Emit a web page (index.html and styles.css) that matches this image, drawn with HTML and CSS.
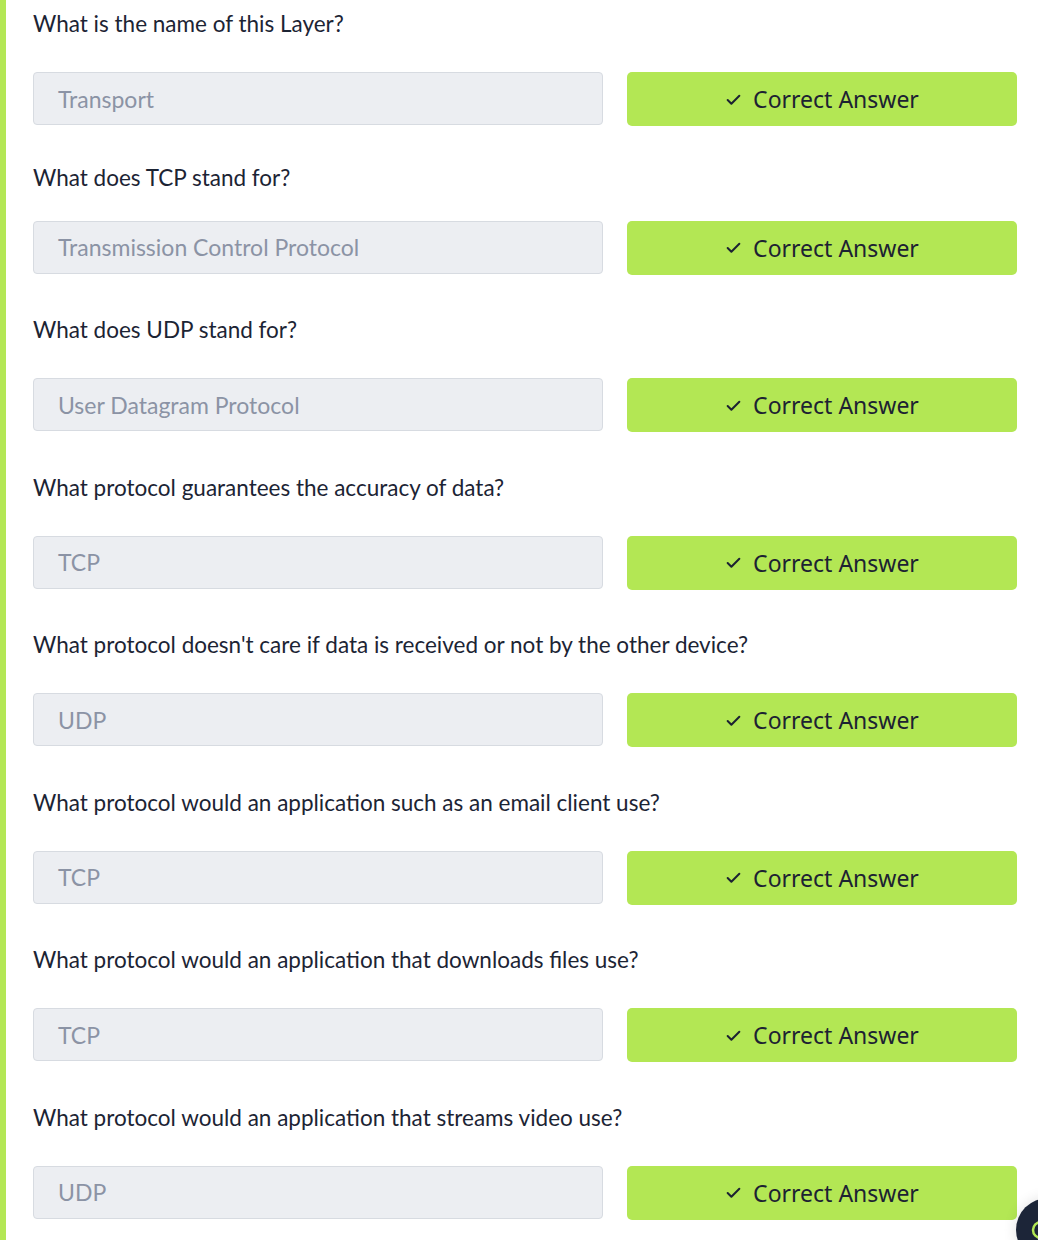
FILE: index.html
```html
<!DOCTYPE html>
<html lang="en">
<head>
<meta charset="utf-8">
<title>Quiz</title>
<link rel="stylesheet" href="styles.css">
</head>
<body>
<main class="task">
  <section class="qa">
    <p class="question">What is the name of this Layer?</p>
    <div class="row">
      <div class="answer">Transport</div>
      <button class="btn"><svg class="check" viewBox="0 0 16 16"><path d="M2.5 8.5 6 12 13.5 4.5"/></svg>Correct Answer</button>
    </div>
  </section>
  <section class="qa qa-tight">
    <p class="question">What does TCP stand for?</p>
    <div class="row">
      <div class="answer">Transmission Control Protocol</div>
      <button class="btn"><svg class="check" viewBox="0 0 16 16"><path d="M2.5 8.5 6 12 13.5 4.5"/></svg>Correct Answer</button>
    </div>
  </section>
  <section class="qa">
    <p class="question">What does UDP stand for?</p>
    <div class="row">
      <div class="answer">User Datagram Protocol</div>
      <button class="btn"><svg class="check" viewBox="0 0 16 16"><path d="M2.5 8.5 6 12 13.5 4.5"/></svg>Correct Answer</button>
    </div>
  </section>
  <section class="qa">
    <p class="question">What protocol guarantees the accuracy of data?</p>
    <div class="row">
      <div class="answer">TCP</div>
      <button class="btn"><svg class="check" viewBox="0 0 16 16"><path d="M2.5 8.5 6 12 13.5 4.5"/></svg>Correct Answer</button>
    </div>
  </section>
  <section class="qa">
    <p class="question">What protocol doesn't care if data is received or not by the other device?</p>
    <div class="row">
      <div class="answer">UDP</div>
      <button class="btn"><svg class="check" viewBox="0 0 16 16"><path d="M2.5 8.5 6 12 13.5 4.5"/></svg>Correct Answer</button>
    </div>
  </section>
  <section class="qa">
    <p class="question">What protocol would an application such as an email client use?</p>
    <div class="row">
      <div class="answer">TCP</div>
      <button class="btn"><svg class="check" viewBox="0 0 16 16"><path d="M2.5 8.5 6 12 13.5 4.5"/></svg>Correct Answer</button>
    </div>
  </section>
  <section class="qa">
    <p class="question">What protocol would an application that downloads files use?</p>
    <div class="row">
      <div class="answer">TCP</div>
      <button class="btn"><svg class="check" viewBox="0 0 16 16"><path d="M2.5 8.5 6 12 13.5 4.5"/></svg>Correct Answer</button>
    </div>
  </section>
  <section class="qa">
    <p class="question">What protocol would an application that streams video use?</p>
    <div class="row">
      <div class="answer">UDP</div>
      <button class="btn"><svg class="check" viewBox="0 0 16 16"><path d="M2.5 8.5 6 12 13.5 4.5"/></svg>Correct Answer</button>
    </div>
  </section>
</main>
<div class="fab"><svg class="fab-icon" viewBox="0 0 24 24"><circle cx="12" cy="12" r="8"/></svg></div>
</body>
</html>
```
FILE: styles.css
```css
html, body {
  margin: 0;
  padding: 0;
  background: #ffffff;
  overflow: hidden;
  height: 1240px;
}
body {
  font-family: Lato, "Open Sans", sans-serif;
  color: #1c2434;
}
.task {
  border-left: 6px solid #b3e755;
  min-height: 1240px;
  box-sizing: border-box;
  padding: 8px 21px 0 27px;
  display: flex;
  flex-direction: column;
}
.qa {
  display: flex;
  flex-direction: column;
  gap: 32px;
  margin-bottom: 39.5px;
}
.qa-tight {
  margin-top: -4px;
  gap: 27px;
}
.question {
  margin: 0;
  font-size: 22.5px;
  line-height: 32px;
}
.row {
  display: flex;
  gap: 24px;
  align-items: flex-start;
}
.answer {
  width: 570px;
  height: 53px;
  box-sizing: border-box;
  background: #eceef2;
  border: 1px solid #d7dbe1;
  border-radius: 4px;
  padding: 0 24px;
  display: flex;
  align-items: center;
  font-size: 23px;
  color: #8b93a5;
}
.btn {
  width: 390px;
  height: 54px;
  border: none;
  border-radius: 5px;
  background: #b3e754;
  color: #1c2232;
  font-family: "Noto Sans", sans-serif;
  font-size: 23px;
  display: flex;
  align-items: center;
  justify-content: center;
  gap: 11px;
  padding: 0;
  cursor: pointer;
}
.check {
  width: 17px;
  height: 17px;
  fill: none;
  stroke: #1c2232;
  stroke-width: 1.9;
  stroke-linecap: round;
  stroke-linejoin: round;
}
.fab {
  position: fixed;
  left: 1016px;
  top: 1198px;
  width: 64px;
  height: 64px;
  border-radius: 50%;
  background: #1c2538;
  box-shadow: 0 0 14px rgba(0, 0, 0, 0.12);
  display: flex;
  align-items: center;
  justify-content: center;
}
.fab-icon {
  width: 24px;
  height: 24px;
  margin-right: 14px;
  fill: none;
  stroke: #b3e754;
  stroke-width: 2.5;
}
```
